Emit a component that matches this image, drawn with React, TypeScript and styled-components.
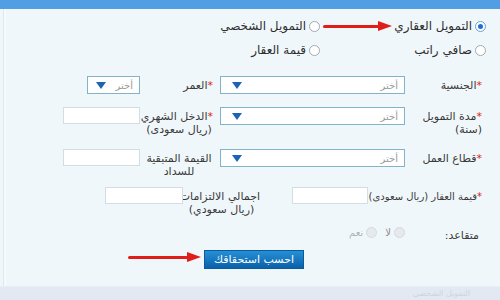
import styled, { createGlobalStyle } from "styled-components";

const GlobalStyle = createGlobalStyle`
  body {
    margin: 0;
    background: #f0f7fb;
    font-family: "DejaVu Sans", "Noto Sans", sans-serif;
  }
`;

const Arrow = () => (
  <ArrowWrap>
    <ArrowHead />
    <ArrowLine />
  </ArrowWrap>
);

const Select = ({ w, arrowGap = 8 }: { w: number; arrowGap?: number }) => (
  <SelectBox style={{ width: w }}>
    <Placeholder>أختر</Placeholder>
    <DropArrow style={{ marginLeft: arrowGap }} />
  </SelectBox>
);

const App = () => {
  return (
    <Page>
      <GlobalStyle />
      <TopBar />
      <Main>
        <RadioGrid>
          <FirstCell>
            <Option>
              <Radio $on />
              <OptionText>التمويل العقاري</OptionText>
            </Option>
            <Arrow />
          </FirstCell>
          <Option>
            <Radio />
            <OptionText>التمويل الشخصي</OptionText>
          </Option>
          <Option>
            <Radio />
            <OptionText>صافي راتب</OptionText>
          </Option>
          <Option>
            <Radio />
            <OptionText>قيمة العقار</OptionText>
          </Option>
        </RadioGrid>

        <Form>
          <Row $h={31}>
            <Field $gap={15}>
              <Label $w={62}>
                <Star>*</Star>الجنسية
              </Label>
              <Select w={185} arrowGap={11} />
            </Field>
            <Field $gap={5}>
              <Label $w={68}>
                <Star>*</Star>العمر
              </Label>
              <Select w={53} />
            </Field>
          </Row>

          <Row $h={42}>
            <Field $gap={15}>
              <Label $w={62}>
                <Star>*</Star>مدة التمويل
                <br />
                (سنة)
              </Label>
              <Select w={185} arrowGap={11} />
            </Field>
            <Field $gap={5}>
              <Label $w={68} $center>
                <Star>*</Star>الدخل الشهري
                <br />
                (ريال سعودى)
              </Label>
              <TextInput $w={77} />
            </Field>
          </Row>

          <Row $h={38}>
            <Field $gap={15}>
              <Label $w={62}>
                <Star>*</Star>قطاع العمل
              </Label>
              <Select w={185} arrowGap={11} />
            </Field>
            <Field $gap={5}>
              <Label $w={68} $center>
                القيمة المتبقية
                <br />
                للسداد
              </Label>
              <TextInput $w={77} />
            </Field>
          </Row>

          <Row $h={39} $gap={32}>
            <Field $gap={2}>
              <Label $w={112} $size={10}>
                <Star>*</Star>قيمة العقار (ريال سعودى)
              </Label>
              <TextInput $w={76} />
            </Field>
            <Field $gap={0}>
              <Label $w={77} $center>
                اجمالي الالتزامات
                <br />
                (ريال سعودي)
              </Label>
              <TextInput $w={78} />
            </Field>
          </Row>

          <Row $h={22} $pad={21}>
            <Label $w={29}>متقاعد:</Label>
            <RetiredGroup>
              <Option>
                <Radio $dim />
                <DimText $strong>لا</DimText>
              </Option>
              <Option>
                <Radio $dim />
                <DimText>نعم</DimText>
              </Option>
            </RetiredGroup>
          </Row>

          <ButtonRow>
            <ButtonWrap>
              <CalcButton>احسب استحقاقك</CalcButton>
              <ButtonArrow>
                <Arrow />
              </ButtonArrow>
            </ButtonWrap>
          </ButtonRow>
        </Form>
      </Main>
      <Footer>
        <FooterText>التمويل الشخصي</FooterText>
      </Footer>
    </Page>
  );
};

const Page = styled.div`
  width: 500px;
  height: 300px;
  overflow: hidden;
  display: flex;
  flex-direction: column;
  background: #f0f7fb;
`;

const TopBar = styled.div`
  height: 9px;
  background: #519ee5;
`;

const Main = styled.div`
  flex: 1;
  direction: rtl;
  margin-left: 3px;
  border-left: 1px solid #dfe8ef;
  box-shadow: inset 2px 0 0 #f6fafd;
`;

const RadioGrid = styled.div`
  display: grid;
  grid-template-columns: 166px auto;
  grid-auto-rows: 16px;
  row-gap: 8px;
  padding: 9px 14px 0 0;
`;

const FirstCell = styled.div`
  display: flex;
  align-items: center;
`;

const Option = styled.label`
  display: flex;
  align-items: center;
  gap: 3px;
  white-space: nowrap;
`;

const Radio = styled.span<{ $on?: boolean; $dim?: boolean }>`
  position: relative;
  width: 9px;
  height: 9px;
  flex-shrink: 0;
  border-radius: 50%;
  border: 1px solid ${(p) => (p.$on ? "#6f9fd0" : p.$dim ? "#d3d9de" : "#a3a9af")};
  background: ${(p) => (p.$dim ? "#e6eaee" : "#ffffff")};

  &::after {
    content: "";
    display: ${(p) => (p.$on ? "block" : "none")};
    position: absolute;
    top: 2px;
    left: 2px;
    width: 5px;
    height: 5px;
    border-radius: 50%;
    background: #1a6fe0;
  }
`;

const OptionText = styled.span`
  font-size: 12px;
  color: #2e2e2e;
`;

const ArrowWrap = styled.div`
  flex: 1;
  display: flex;
  align-items: center;
  margin-right: 2px;
  margin-left: 3px;
`;

const ArrowHead = styled.span`
  width: 0;
  height: 0;
  border-left: 14px solid #e11d1a;
  border-top: 5px solid transparent;
  border-bottom: 5px solid transparent;
`;

const ArrowLine = styled.span`
  flex: 1;
  height: 3px;
  background: #e11d1a;
  border-radius: 2px;
  margin-right: -1px;
`;

const Form = styled.div`
  margin-top: 18px;
  display: flex;
  flex-direction: column;
`;

const Row = styled.div<{ $h: number; $gap?: number; $pad?: number }>`
  height: ${(p) => p.$h}px;
  display: flex;
  align-items: flex-start;
  gap: ${(p) => p.$gap ?? 7}px;
  padding-right: ${(p) => p.$pad ?? 18}px;
`;

const Field = styled.div<{ $gap: number }>`
  display: flex;
  align-items: flex-start;
  gap: ${(p) => p.$gap}px;
`;

const Label = styled.div<{ $w: number; $center?: boolean; $size?: number }>`
  width: ${(p) => p.$w}px;
  flex-shrink: 0;
  padding-top: 3px;
  font-size: ${(p) => p.$size ?? 11}px;
  line-height: 13px;
  color: #3a3a3a;
  white-space: nowrap;
  text-align: ${(p) => (p.$center ? "center" : "right")};
`;

const Star = styled.span`
  color: #d9261c;
`;

const SelectBox = styled.div`
  height: 18px;
  box-sizing: border-box;
  display: flex;
  align-items: center;
  justify-content: space-between;
  padding-right: 6px;
  background: #ffffff;
  border: 1px solid #83b3cb;
`;

const Placeholder = styled.span`
  font-size: 10px;
  color: #9a9a9a;
`;

const DropArrow = styled.span`
  width: 0;
  height: 0;
  border-top: 7px solid #1b64b4;
  border-left: 5px solid transparent;
  border-right: 5px solid transparent;
`;

const TextInput = styled.div<{ $w: number }>`
  width: ${(p) => p.$w}px;
  height: 17px;
  box-sizing: border-box;
  background: #ffffff;
  border: 1px solid #d3dde4;
`;

const RetiredGroup = styled.div`
  display: flex;
  align-items: center;
  gap: 8px;
  margin-right: 38px;
  height: 12px;
`;

const DimText = styled.span<{ $strong?: boolean }>`
  font-size: 10px;
  color: ${(p) => (p.$strong ? "#8c8c8c" : "#b2b2b2")};
`;

const ButtonRow = styled.div`
  display: flex;
  justify-content: center;
  margin-left: 4px;
`;

const ButtonWrap = styled.div`
  position: relative;
`;

const CalcButton = styled.button`
  width: 100px;
  height: 19px;
  padding: 0;
  border: 1px solid #0b5a9a;
  background: linear-gradient(#2590d6, #0a61ab);
  color: #ffffff;
  font-family: "DejaVu Sans", sans-serif;
  font-size: 11px;
  font-weight: normal;
  cursor: pointer;
`;

const ButtonArrow = styled.div`
  position: absolute;
  top: 4px;
  left: -79px;
  width: 78px;
  display: flex;
`;

const Footer = styled.div`
  height: 13px;
  background: #e2e9f2;
  border-top: 1px solid #e8eef5;
  direction: rtl;
  padding-right: 30px;
  overflow: hidden;
`;

const FooterText = styled.span`
  display: block;
  margin-top: 1px;
  font-size: 8px;
  line-height: 11px;
  color: #cdd5df;
`;

export default App;
